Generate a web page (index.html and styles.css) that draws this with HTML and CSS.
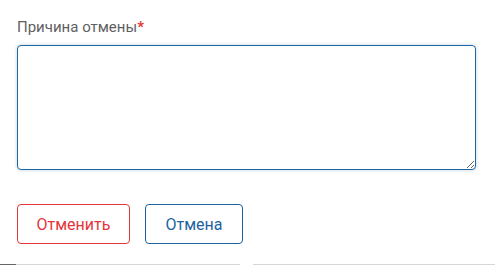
FILE: index.html
```html
<!DOCTYPE html>
<html lang="ru">
<head>
<meta charset="utf-8">
<link rel="stylesheet" href="styles.css">
</head>
<body>
<div class="form">
  <label class="label">Причина отмены<span class="req">*</span></label>
  <div class="field"><textarea class="area"></textarea></div>
  <div class="actions">
    <button class="btn btn-danger">Отменить</button>
    <button class="btn btn-primary">Отмена</button>
  </div>
</div>
<div class="bottom">
  <div class="seg seg-a"><span class="thumb"></span></div>
  <div class="seg seg-b"></div>
</div>
</body>
</html>
```
FILE: styles.css
```css
html, body { margin: 0; padding: 0; background: #fff; }
body { width: 495px; height: 265px; overflow: hidden; font-family: Roboto, "Liberation Sans", sans-serif; }
.form { padding: 18px 17px 0 17px; height: 246px; box-sizing: border-box; }
.label { display: block; font-size: 15px; line-height: 18px; color: #5f5f5f; margin-bottom: 9px; }
.req { color: #e53935; font-weight: bold; }
.field { width: 459px; height: 125px; }
.area {
  display: block; width: 459px; height: 125px; box-sizing: border-box; margin: 0;
  border: 1px solid #1f67a3; border-radius: 4px; resize: both; outline: none;
  box-shadow: 0 0 3px 1px rgba(31,103,163,0.18);
  font-family: inherit; font-size: 14px;
}
.actions { display: flex; gap: 15px; margin-top: 34px; }
.btn {
  height: 40px; box-sizing: border-box; border-radius: 4px; background: #fff;
  font-family: Roboto, "Liberation Sans", sans-serif; font-size: 16px; padding: 0; cursor: pointer;
}
.btn-danger { width: 113px; border: 1px solid #e4353d; color: #e4353d; }
.btn-primary { width: 98px; border: 1px solid #1c62a0; color: #1c62a0; }
.bottom { display: flex; gap: 13px; margin-top: 18px; }
.seg { height: 1px; background: #d6d6d6; }
.seg-a { width: 240px; display: flex; }
.seg-b { flex: 1; }
.thumb { width: 16px; height: 1px; background: #666; }
```
